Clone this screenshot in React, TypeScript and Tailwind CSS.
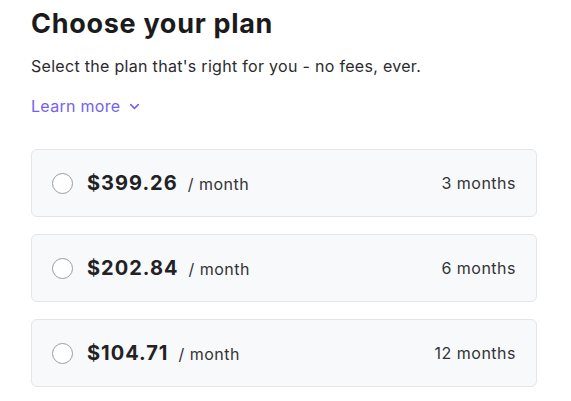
import { ChevronDown } from 'lucide-react';

interface Plan {
  price: string;
  term: string;
}

const plans: Plan[] = [
  { price: '$399.26', term: '3 months' },
  { price: '$202.84', term: '6 months' },
  { price: '$104.71', term: '12 months' },
];

export default function App() {
  return (
    <main className="w-[571px] h-[401px] bg-white px-[31px] pt-[6px] font-['Inter',sans-serif] text-[#1b1b1d]">
      <h1 className="text-[27px] font-bold leading-[36px] tracking-[0.7px]">Choose your plan</h1>
      <p className="mt-[14px] text-[16px] leading-[21px] tracking-[0.3px] text-[#2b2b2e]">
        Select the plan that's right for you - no fees, ever.
      </p>
      <button className="mt-[19px] flex items-center gap-[7px] text-[16px] leading-[21px] tracking-[0.3px] text-[#7262f0]">
        Learn more
        <ChevronDown className="w-[15px] h-[15px]" strokeWidth={2.5} />
      </button>

      <div className="mt-[32px] flex flex-col gap-[17px] w-[506px]">
        {plans.map((plan) => (
          <label
            key={plan.term}
            className="flex items-center h-[68px] px-[20px] rounded-[6px] border border-[#e3e5e9] bg-[#f8f9fb] cursor-pointer"
          >
            <span className="w-[21px] h-[21px] rounded-full border-[1.5px] border-[#9a9ca3] bg-white" />
            <span className="ml-[14px] flex items-baseline">
              <span className="text-[20px] font-bold tracking-[1px] text-[#222225]">{plan.price}</span>
              <span className="ml-[10px] text-[16px] tracking-[0.5px] text-[#333336]">/ month</span>
            </span>
            <span className="ml-auto text-[16px] tracking-[0.5px] text-[#333336]">{plan.term}</span>
          </label>
        ))}
      </div>
    </main>
  );
}
